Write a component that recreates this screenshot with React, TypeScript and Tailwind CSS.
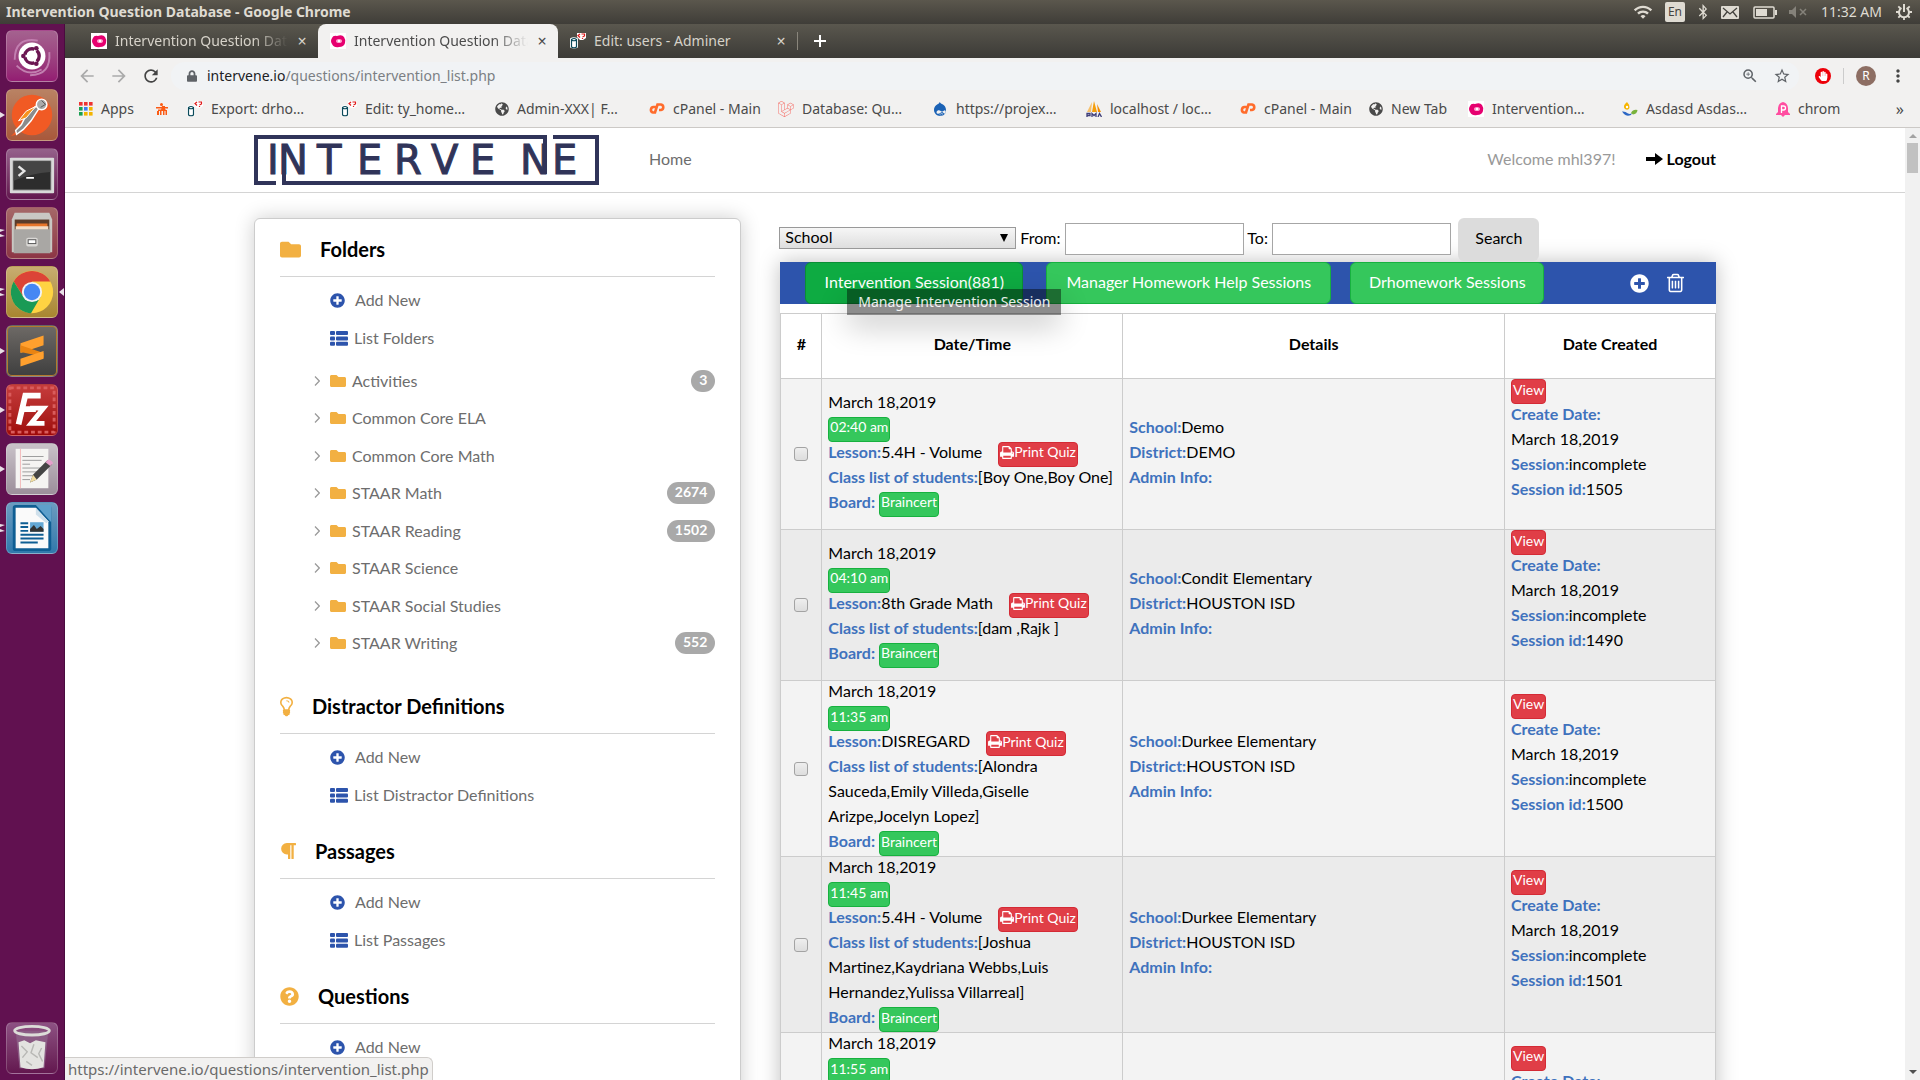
import React from "react";
import {
  FaFolder,
  FaPlusCircle,
  FaParagraph,
  FaQuestionCircle,
  FaDrupal,
  FaLaravel,
  FaGlobeAmericas,
  FaBluetoothB,
  FaHandPaper,
  FaLock,
} from "react-icons/fa";
import { MdArrowBack, MdArrowForward, MdRefresh, MdStarBorder, MdZoomIn, MdMoreVert, MdWifi } from "react-icons/md";

/* ---------- shared glyphs ---------- */

function PrintIcon() {
  return (
    <svg viewBox="0 0 1664 1792" className="h-[15px] w-[14px] shrink-0" fill="currentColor" aria-hidden="true">
      <path d="M384 1536h896v-256h-896v256zm0-640h896v-384h-160q-40 0-68-28t-28-68v-160h-640v640zm1152 64q0-26-19-45t-45-19-45 19-19 45 19 45 45 19 45-19 19-45zm128 0v416q0 13-9.500 22.500t-22.500 9.500h-224v160q0 40-28 68t-68 28h-960q-40 0-68-28t-28-68v-160h-224q-13 0-22.500-9.500t-9.500-22.500v-416q0-79 56.500-135.500t135.500-56.500h64v-544q0-40 28-68t68-28h672q40 0 88 20t76 48l152 152q28 28 48 76t20 88v256h64q79 0 135.500 56.500t56.500 135.500z" />
    </svg>
  );
}

function TrashIcon() {
  return (
    <svg viewBox="0 0 1408 1792" className="h-[22px] w-[17px]" fill="currentColor" aria-hidden="true">
      <path d="M512 736v576q0 14-9 23t-23 9h-64q-14 0-23-9t-9-23v-576q0-14 9-23t23-9h64q14 0 23 9t9 23zm256 0v576q0 14-9 23t-23 9h-64q-14 0-23-9t-9-23v-576q0-14 9-23t23-9h64q14 0 23 9t9 23zm256 0v576q0 14-9 23t-23 9h-64q-14 0-23-9t-9-23v-576q0-14 9-23t23-9h64q14 0 23 9t9 23zm128 724v-948h-896v948q0 22 7 40.500t14.500 27 10.500 8.500h832q3 0 10.500-8.500t14.500-27 7-40.500zm-672-1076h448l-48-117q-7-9-17-11h-317q-10 2-17 11zm928 32v64q0 14-9 23t-23 9h-96v948q0 83-47 143.500t-113 60.500h-832q-66 0-113-58.500t-47-141.500v-952h-96q-14 0-23-9t-9-23v-64q0-14 9-23t23-9h309l70-167q15-37 54-63t79-26h320q40 0 79 26t54 63l70 167h309q14 0 23 9t9 23z" />
    </svg>
  );
}

function BulbIcon() {
  return (
    <svg viewBox="0 0 1024 1792" className="h-[23px] w-[13px]" fill="currentColor" aria-hidden="true">
      <path d="M736 576q0 13-9.500 22.500t-22.500 9.500-22.500-9.500-9.500-22.500q0-46-54-71t-106-25q-13 0-22.500-9.500t-9.500-22.500 9.500-22.500 22.500-9.500q50 0 99.500 16t87 54 37.500 90zm160 0q0-72-34.500-134t-90-101.500-123-62-136.500-22.500-136.500 22.500-123 62-90 101.500-34.500 134q0 101 68 180 10 11 30.500 33t30.500 33q128 153 141 298h228q13-145 141-298 10-11 30.500-33t30.500-33q68-79 68-180zm128 0q0 155-103 268-45 49-74.500 87t-59.500 95.500-34 107.500q47 28 47 82 0 37-25 64 25 27 25 64 0 52-45 81 13 23 13 47 0 46-31.500 71t-77.500 25q-20 44-60 70t-87 26-87-26-60-70q-46 0-77.500-25t-31.500-71q0-24 13-47-45-29-45-81 0-37 25-64-25-27-25-64 0-54 47-82-4-50-34-107.500t-59.500-95.500-74.500-87q-103-113-103-268 0-99 44.500-184.500t117-142 164-89 186.500-32.500 186.500 32.500 164 89 117 142 44.500 184.500z" />
    </svg>
  );
}

function ListIcon() {
  return (
    <svg viewBox="0 0 18 15" className="h-[15px] w-[18px] shrink-0" fill="currentColor" aria-hidden="true">
      {[0, 5.4, 10.8].map((y) => (
        <g key={y}>
          <rect x="0" y={y} width="5" height="4" rx="1" />
          <rect x="6" y={y} width="12" height="4" rx="1" />
        </g>
      ))}
    </svg>
  );
}

function PinkFavicon() {
  return (
    <svg viewBox="0 0 16 16" className="size-4 shrink-0" aria-hidden="true">
      <rect width="16" height="16" fill="#fff" />
      <path d="M2 5Q3 2 7 3Q12 1 14 4Q16 7 15 10Q14 14 9 14Q4 15 2 11Q0 8 2 5Z" fill="#e6006f" />
      <ellipse cx="9" cy="8" rx="3" ry="2" fill="#ff9ccc" />
      <circle cx="9" cy="8" r="1.200" fill="#fff" />
    </svg>
  );
}

function AdminerIcon() {
  return (
    <svg viewBox="0 0 16 16" className="size-4 shrink-0" aria-hidden="true">
      <path d="M0 5.500Q3.500 3 8 5.500V14.500Q4 16.500 0 14.500Z" fill="#fff" />
      <path d="M1.500 6.500Q4 4.500 6.500 6.500V14Q4 15.500 1.500 14Z" fill="#fff" stroke="#0b4a5a" strokeWidth="1.200" />
      <path d="M1.500 7Q4 8.500 6.500 7" fill="none" stroke="#0b4a5a" strokeWidth="1.200" />
      <path d="M7 0H16V5L13 7H10L7 4Z" fill="#fff" />
      <path d="M10 1L8 2.500L10 4.500M11.500 1H14.500V3L12.500 4M12.500 5V6" fill="none" stroke="#e01b1b" strokeWidth="1.200" />
    </svg>
  );
}

function CpanelIcon() {
  return (
    <svg viewBox="0 0 16 12" className="h-3 w-4 shrink-0" fill="none" stroke="#ff6c2c" strokeWidth="2.600" aria-hidden="true">
      <path d="M7 4H4.500A2.800 2.800 0 0 0 4 9.500H6L8.500 1.500H12A2.800 2.800 0 0 1 12 7H10" />
    </svg>
  );
}

function FigureIcon() {
  return (
    <svg viewBox="0 0 12 12" className="size-3 shrink-0" fill="#fb5b14" aria-hidden="true">
      <circle cx="5.500" cy="1.500" r="1.500" />
      <path d="M0 4H12V5.500H0ZM2 6.500H10V8H2ZM1 8H3V12H1ZM4 8H5.500V12H4ZM7 8H8.500V12H7ZM9.500 7H11V12H9.500Z" />
      <path d="M6 3H9V7H5Z" />
    </svg>
  );
}

function AppsIcon() {
  const colors = ["#e33", "#e33", "#e33", "#1a9f52", "#3b7ded", "#f3b400", "#1a9f52", "#f3b400", "#f3b400"];
  return (
    <svg viewBox="0 0 14 14" className="size-3.5 shrink-0" aria-hidden="true">
      {colors.map((c, i) => (
        <rect key={i} x={(i % 3) * 5} y={Math.floor(i / 3) * 5} width="3.600" height="3.600" fill={c} />
      ))}
    </svg>
  );
}

function PmaIcon() {
  return (
    <svg viewBox="0 0 16 16" className="size-4 shrink-0" aria-hidden="true">
      <path d="M6 1L1 11H5Z" fill="#f7c069" />
      <path d="M8 0L6 11H11Z" fill="#f59e0b" />
      <path d="M11 3L12 11H15Z" fill="#f08a00" />
      <path d="M1 16V12.500H4V14.500H1M6 16V12.500L8 14.500L10 12.500V16M12 16L13.500 12.500L15.500 16" fill="none" stroke="#3f3f7a" strokeWidth="1.300" />
    </svg>
  );
}

function WavesIcon() {
  return (
    <svg viewBox="0 0 16 16" className="size-4 shrink-0" aria-hidden="true">
      <path d="M5 1Q8 4 7.500 7Q6 10 3 8Q0 5 5 1Z" fill="#f7b500" />
      <circle cx="5" cy="6" r="1.200" fill="#fff" />
      <path d="M0 10.500Q3 10 6 12.500Q8 13.500 10 12L9 14Q5 16 2 13Z" fill="#2c67c4" />
      <path d="M9 12Q11 8 15.500 9Q15 13 11 13.500Z" fill="#79b23c" />
    </svg>
  );
}

function BellIcon() {
  return (
    <svg viewBox="0 0 14 16" className="h-4 w-3.5 shrink-0" aria-hidden="true">
      <path d="M7 1Q11.500 2 12 7V11L14 13V14H0V13L2 11V7Q2.500 2 7 1Z" fill="#ff4da0" />
      <path d="M5 14H9L7 16Z" fill="#ff4da0" />
      <path d="M5.500 12V5H7.500A1.800 1.800 0 0 1 7.500 9H5.500" fill="none" stroke="#fff" strokeWidth="1.300" />
    </svg>
  );
}

/* ---------- desktop: top panel and launcher ---------- */

function SystemBar() {
  return (
    <div className="flex h-6 shrink-0 items-center justify-between bg-linear-to-b from-[#5b574d] to-[#3f3d38] pr-2 pl-1.5 text-[#dfdbd2]">
      <span className="text-sm leading-6 font-bold">Intervention Question Database - Google Chrome</span>
      <div className="flex items-center">
        <MdWifi className="mr-3 size-5" />
        <span className="mr-3 flex h-5 w-5 items-center justify-center rounded-xs bg-[#dfdbd2] text-xs text-[#45433e]">En</span>
        <FaBluetoothB className="mr-3 h-4 w-3" />
        <svg viewBox="0 0 18 13" className="mr-3.5 h-[13px] w-[18px]" aria-hidden="true">
          <rect width="18" height="13" rx="1" fill="#dfdbd2" />
          <path d="M2 2L9 8L16 2M2 11L6 6M16 11L12 6" fill="none" stroke="#45433e" strokeWidth="1.300" />
        </svg>
        <svg viewBox="0 0 24 13" className="mr-3 h-[13px] w-6" aria-hidden="true">
          <rect x="1" y="1" width="20" height="11" rx="1" fill="none" stroke="#dfdbd2" strokeWidth="1.500" />
          <rect x="3" y="3" width="11" height="7" fill="#dfdbd2" />
          <rect x="22" y="4" width="2" height="5" fill="#dfdbd2" />
        </svg>
        <svg viewBox="0 0 18 12" className="mr-3.5 h-3 w-[18px] text-[#85827a]" aria-hidden="true">
          <path d="M0 4H3L7 0V12L3 8H0Z" fill="currentColor" />
          <path d="M11 3L17 9M17 3L11 9" stroke="currentColor" strokeWidth="1.500" />
        </svg>
        <span className="mr-3.5 text-sm leading-6">11:32 AM</span>
        <svg viewBox="0 0 16 16" className="size-4" fill="none" stroke="#dfdbd2" aria-hidden="true">
          <path d="M5.500 4A5 5 0 1 0 10.500 4" strokeWidth="2" />
          <path d="M8 0V8" strokeWidth="2" />
          <path d="M8 13V16M0 8H3M13 8H16M2.300 2.300L4.500 4.500M13.700 2.300L11.500 4.500M2.300 13.700L4.500 11.500M13.700 13.700L11.500 11.500" strokeWidth="1.800" />
        </svg>
      </div>
    </div>
  );
}

const launcher: { name: string; tile: string; marks: number; active?: boolean; art: React.ReactNode }[] = [
  {
    name: "Dash",
    tile: "bg-linear-to-b from-[#a4628f] to-[#931c72]",
    marks: 0,
    art: (
      <>
        <path d="M8 30Q8 6 32 10M44 22Q46 46 24 46M10 36Q22 48 36 40" fill="none" stroke="#c27fb0" strokeWidth="2" />
        <circle cx="26" cy="26" r="14" fill="#fff" />
        <circle cx="26" cy="26" r="7.500" fill="none" stroke="#6b1652" strokeWidth="3.500" strokeDasharray="13 2.700" strokeDashoffset="-9" />
        <circle cx="17" cy="26" r="2.400" fill="#6b1652" />
        <circle cx="30.500" cy="18" r="2.400" fill="#6b1652" />
        <circle cx="30.500" cy="34" r="2.400" fill="#6b1652" />
      </>
    ),
  },
  {
    name: "Postman",
    tile: "bg-linear-to-b from-[#b98263] to-[#a8583b]",
    marks: 1,
    art: (
      <>
        <circle cx="26" cy="26" r="21" fill="#f15a24" />
        <path d="M4 48L12 40L10 46Z" fill="#f15a24" />
        <path d="M34 18L25 32L17 41L10 46L9 42L15 36L21 24L30 17Z" fill="#8b8b8b" stroke="#fff" strokeWidth="1.500" />
        <path d="M30 17L20 22L12 32L20 29Z" fill="#f7931e" stroke="#fff" />
        <circle cx="36" cy="15" r="5.500" fill="#aaa" stroke="#fff" strokeWidth="1.500" />
        <path d="M36 11L40 15L35 18" fill="none" stroke="#555" />
      </>
    ),
  },
  {
    name: "Terminal",
    tile: "bg-linear-to-b from-[#95618b] to-[#63174f]",
    marks: 0,
    art: (
      <>
        <rect x="3" y="9" width="46" height="37" rx="1" fill="#d9d9d9" />
        <rect x="6" y="12" width="40" height="31" fill="#777" />
        <rect x="7" y="13" width="38" height="29" fill="#2d2d2d" />
        <path d="M7 13H45V24Q26 25 7 33Z" fill="#454545" />
        <path d="M12 18L18 23L12 28" fill="none" stroke="#e6e6e6" strokeWidth="2.500" />
        <path d="M20 30H28" stroke="#fff" strokeWidth="2" />
      </>
    ),
  },
  {
    name: "Files",
    tile: "bg-linear-to-b from-[#a56868] to-[#8c3545]",
    marks: 2,
    art: (
      <>
        <path d="M8 5H44L47 12V46H5V12Z" fill="#c9c7c3" />
        <rect x="8" y="12" width="36" height="14" fill="#5b3b2a" />
        <path d="M10 16H42V22H10Z" fill="#e8752b" />
        <path d="M9 19H43V24H9Z" fill="#f4dcc7" />
        <path d="M7 22H45V47H7Z" fill="#a9a7a4" />
        <rect x="20" y="31" width="12" height="9" rx="2" fill="#dad8d5" />
        <rect x="22" y="33" width="8" height="4" fill="#fff" stroke="#555" />
      </>
    ),
  },
  {
    name: "Google Chrome",
    tile: "bg-linear-to-b from-[#c8ad70] to-[#a8862f]",
    marks: 2,
    active: true,
    art: (
      <>
        <circle cx="26" cy="26" r="22" fill="#ffd342" />
        <path d="M7 15A22 22 0 0 1 45 15H26L17 31Z" fill="#dc4437" />
        <path d="M7 15A22 22 0 0 0 25 48L35 31L17 31Z" fill="#1a9a55" />
        <circle cx="26" cy="26" r="10.500" fill="#f3f3f3" />
        <circle cx="26" cy="26" r="8.500" fill="#4587f3" />
      </>
    ),
  },
  {
    name: "Sublime Text",
    tile: "bg-linear-to-b from-[#6e6a66] to-[#3f3f3f] ring-1 ring-[#b37a2d] ring-inset",
    marks: 1,
    art: (
      <>
        <path d="M14 18L38 10V20L14 28Z" fill="#ffa02e" />
        <path d="M14 20L38 28V33L28 30L14 27Z" fill="#e98412" />
        <path d="M14 34L38 26V34L14 42Z" fill="#ffa02e" />
      </>
    ),
  },
  {
    name: "FileZilla",
    tile: "bg-linear-to-b from-[#c63c3c] to-[#9e0808]",
    marks: 1,
    art: (
      <>
        <rect x="3" y="3" width="46" height="46" fill="none" stroke="#d95c5c" strokeWidth="3" strokeDasharray="4 3" />
        <path d="M12 41L19 11H35M15 25H30" fill="none" stroke="#fff" strokeWidth="6" />
        <path d="M24 24H38L25 40H39" fill="none" stroke="#fff" strokeWidth="5" />
      </>
    ),
  },
  {
    name: "Text Editor",
    tile: "bg-linear-to-b from-[#c9c2c8] to-[#9c8f9b]",
    marks: 1,
    art: (
      <>
        <rect x="9" y="5" width="34" height="41" fill="#f5f4f2" />
        <path d="M14 5V46" stroke="#f2b9b9" />
        <path d="M16 13H38M16 17H36M16 21H24M16 25H38M16 29H34M16 33H30M16 37H24" stroke="#9a9a9a" />
        <path d="M24 40L27 32L42 17L47 21L31 37Z" fill="#444" />
        <path d="M24 40L27 32L31 37Z" fill="#f0dca0" />
        <path d="M40 19L43 16Q47 17 48 20L45 23Z" fill="#e6a0cc" />
      </>
    ),
  },
  {
    name: "LibreOffice Writer",
    tile: "bg-linear-to-b from-[#6c9cc0] to-[#2f79ac]",
    marks: 2,
    art: (
      <>
        <rect x="6" y="2" width="40" height="48" rx="3" fill="#0f5e93" />
        <path d="M30 2H46V20Z" fill="#5ea0cb" />
        <path d="M9 5H30L43 19V47H9Z" fill="#fafafa" />
        <path d="M30 5L43 19L41 21L30 12Z" fill="#cfe0eb" />
        <path d="M14 21H22M14 25H22M14 29H22M14 33H38M14 37H38M14 41H32" stroke="#0f5e93" strokeWidth="2" />
        <rect x="24" y="20" width="14" height="10" fill="#63a7d4" />
        <path d="M24 30V27L28 23L31 27L35 24L38 27V30Z" fill="#333" />
      </>
    ),
  },
];

function Tile({ item }: { item: (typeof launcher)[number] }) {
  return (
    <div className="relative flex justify-center">
      {item.marks > 0 && (
        <svg viewBox="0 0 5 10" className="absolute top-[21px] left-0 h-[10px] w-[5px]" fill="#e8e0e6" aria-hidden="true">
          {item.marks === 1 ? <path d="M0 2L5 5L0 8Z" /> : <path d="M0 1L5 2L0 4ZM0 6L5 8L0 9Z" />}
        </svg>
      )}
      <button type="button" aria-label={item.name} className={`size-[52px] overflow-hidden rounded-md border border-white/20 ${item.tile}`}>
        <svg viewBox="0 0 52 52" className="size-full" aria-hidden="true">
          {item.art}
        </svg>
      </button>
      {item.active && (
        <svg viewBox="0 0 5 8" className="absolute top-[22px] right-0 h-2 w-[5px]" fill="#e8e0e6" aria-hidden="true">
          <path d="M5 0L0 4L5 8Z" />
        </svg>
      )}
    </div>
  );
}

function Launcher() {
  return (
    <nav aria-label="Launcher" className="flex w-[65px] shrink-0 flex-col gap-[7px] border-r border-[#4a0b3f] bg-[#611150] pt-1.5 pb-1.5">
      {launcher.map((item) => (
        <Tile key={item.name} item={item} />
      ))}
      <div className="mt-auto">
        <Tile
          item={{
            name: "Trash",
            tile: "bg-linear-to-b from-[#8d5183] to-[#63174f]",
            marks: 0,
            art: (
              <>
                <path d="M9 8L13 47H39L43 8Z" fill="#8b5b84" />
                <path d="M12 20L18 18L24 21L30 18L40 20L38 46Q26 50 14 46Z" fill="#e3e3e0" />
                <path d="M15 24L21 30L16 36M28 22L25 31L32 36M36 26L33 32L37 40M20 40L26 44" fill="none" stroke="#b8b8b5" strokeWidth="1.500" />
                <ellipse cx="26" cy="8" rx="18" ry="4.500" fill="none" stroke="#dcdcd8" strokeWidth="3" />
              </>
            ),
          }}
        />
      </div>
    </nav>
  );
}

/* ---------- browser chrome ---------- */

function TabStrip() {
  return (
    <div className="flex h-[34px] shrink-0 items-stretch bg-linear-to-b from-[#5a574e] to-[#3c3b37] pl-3.5 text-sm text-[#d6d2c9]">
      <div className="flex w-[239px] items-center pr-2.5 pl-3">
        <PinkFavicon />
        <span className="ml-2 flex-1 overflow-hidden whitespace-nowrap mask-r-from-80%">Intervention Question Database</span>
        <button type="button" aria-label="Close tab" className="ml-2 w-3 text-base">×</button>
      </div>
      <div className="flex w-[240px] items-center rounded-t-lg bg-[#f2f1f0] pr-2.5 pl-3 text-[#4c4c4c]">
        <PinkFavicon />
        <span className="ml-2 flex-1 overflow-hidden whitespace-nowrap mask-r-from-80%">Intervention Question Database</span>
        <button type="button" aria-label="Close tab" className="ml-2 w-3 text-base">×</button>
      </div>
      <div className="flex w-[239px] items-center pr-2.5 pl-3">
        <AdminerIcon />
        <span className="ml-2 flex-1 overflow-hidden whitespace-nowrap">Edit: users - Adminer</span>
        <button type="button" aria-label="Close tab" className="ml-2 w-3 text-base">×</button>
      </div>
      <div className="my-2 w-px bg-[#8a867c]" />
      <button type="button" aria-label="New tab" className="ml-4 flex items-center">
        <svg viewBox="0 0 12 12" className="size-3" aria-hidden="true">
          <path d="M6 0V12M0 6H12" stroke="#fff" strokeWidth="2" />
        </svg>
      </button>
    </div>
  );
}

function AddressBar() {
  return (
    <div className="flex h-9 shrink-0 items-center bg-[#f2f1f0] pr-3 pl-3 text-[#5f6368]">
      <MdArrowBack className="mr-3 size-5 text-[#aaa]" />
      <MdArrowForward className="mr-3 size-5 text-[#aaa]" />
      <MdRefresh className="mr-2.5 size-5 text-[#444]" />
      <div className="flex h-7 flex-1 items-center rounded-full bg-[#f1f3f5] pr-2 pl-4">
        <FaLock className="mr-2.5 h-3 w-2.5 shrink-0" />
        <span className="flex-1 text-sm text-[#7b7f84]">
          <span className="text-[#202124]">intervene.io</span>/questions/intervention_list.php
        </span>
        <MdZoomIn className="mr-3.5 size-[18px]" />
        <MdStarBorder className="size-[18px]" />
      </div>
      <span className="ml-4 flex size-4 items-center justify-center rounded-full bg-[#ed0009] text-white">
        <FaHandPaper className="size-2.5" />
      </span>
      <span className="mx-3 h-4 w-px bg-[#ccc]" />
      <span className="mr-3 flex size-5 items-center justify-center rounded-full bg-[#8d6e63] text-xs text-white">R</span>
      <MdMoreVert className="size-5 text-[#444]" />
    </div>
  );
}

const bookmarks: { label: string; width: string; icon: React.ReactNode }[] = [
  { label: "Apps", width: "w-[77px]", icon: <AppsIcon /> },
  { label: "", width: "w-[31px]", icon: <FigureIcon /> },
  { label: "Export: drho…", width: "w-[154px]", icon: <AdminerIcon /> },
  { label: "Edit: ty_home…", width: "w-[154px]", icon: <AdminerIcon /> },
  { label: "Admin-XXX| F…", width: "w-[154px]", icon: <FaGlobeAmericas className="size-3.5 shrink-0" /> },
  { label: "cPanel - Main", width: "w-[129px]", icon: <CpanelIcon /> },
  { label: "Database: Qu…", width: "w-[154px]", icon: <FaLaravel className="size-4 shrink-0 text-[#f56f68]" /> },
  { label: "https://projex…", width: "w-[154px]", icon: <FaDrupal className="size-4 shrink-0 text-[#1b62b5]" /> },
  { label: "localhost / loc…", width: "w-[154px]", icon: <PmaIcon /> },
  { label: "cPanel - Main", width: "w-[129px]", icon: <CpanelIcon /> },
  { label: "New Tab", width: "w-[99px]", icon: <FaGlobeAmericas className="size-3.5 shrink-0" /> },
  { label: "Intervention…", width: "w-[154px]", icon: <PinkFavicon /> },
  { label: "Asdasd Asdas…", width: "w-[154px]", icon: <WavesIcon /> },
  { label: "chrom", width: "w-[80px]", icon: <BellIcon /> },
];

function BookmarksBar() {
  return (
    <div className="flex h-[34px] shrink-0 items-center border-b border-[#ccc9c6] bg-[#f2f1f0] pb-1 pl-3.5 text-sm text-[#4a4a4a]">
      {bookmarks.map((b, i) => (
        <a key={i} href="#" aria-label={b.label || "Bookmark"} className={`flex shrink-0 items-center gap-2 whitespace-nowrap ${b.width}`}>
          {b.icon}
          {b.label}
        </a>
      ))}
      <button type="button" aria-label="More bookmarks" className="mr-4 ml-auto text-base leading-5">»</button>
    </div>
  );
}

/* ---------- page ---------- */

function Logo() {
  return (
    <svg viewBox="0 0 345 50" className="h-[50px] w-[345px]" role="img" aria-label="Intervene">
      <g fill="none" stroke="#303459" strokeWidth="4">
        <path d="M291 39V2H2V48H22" />
        <path d="M30 11V48H343V2H299" />
      </g>
      <text
        x="13 24 63 103 140 177 216 266 298"
        y="39"
        fill="#303459"
        stroke="#303459"
        fontSize="40"
        className="font-['DejaVu_Sans']"
      >
        INTERVENE
      </text>
    </svg>
  );
}

function PageHeader() {
  return (
    <header className="h-[65px] shrink-0 border-b border-[#d4d4d4] bg-white">
      <div className="mx-auto flex h-full max-w-[1462px] items-center">
        <Logo />
        <a href="#" className="ml-[50px] pb-0.5 text-[#6d6d6d]">Home</a>
        <span className="ml-auto pb-0.5 text-[#999]">Welcome mhl397!</span>
        <a href="#" className="ml-[30px] flex items-center gap-1 pb-0.5 font-bold text-black">
          <svg viewBox="0 0 17 12" className="h-3 w-[17px]" aria-hidden="true">
            <path d="M0 4H9V0L17 6L9 12V8H0Z" fill="#000" />
          </svg>
          Logout
        </a>
      </div>
    </header>
  );
}

function SectionTitle({ icon, children }: { icon: React.ReactNode; children: React.ReactNode }) {
  return (
    <h2 className="flex h-[55px] items-center gap-[19px] border-b border-[#d4d4d4] text-xl font-bold text-black">
      <span className="text-[#f2b042]">{icon}</span>
      {children}
    </h2>
  );
}

function SectionLinks({ list }: { list?: string }) {
  return (
    <ul className="pt-1 pb-px pl-[50px]">
      <li className="flex h-[38px] items-center">
        <a href="#" className="flex items-center gap-2.5">
          <FaPlusCircle className="size-[15px] text-[#2d54ac]" />
          Add New
        </a>
      </li>
      {list && (
        <li className="flex h-[38px] items-center">
          <a href="#" className="flex items-center gap-1.5">
            <span className="text-[#2d54ac]">
              <ListIcon />
            </span>
            {list}
          </a>
        </li>
      )}
    </ul>
  );
}

const folders: [string, string?][] = [
  ["Activities", "3"],
  ["Common Core ELA"],
  ["Common Core Math"],
  ["STAAR Math", "2674"],
  ["STAAR Reading", "1502"],
  ["STAAR Science"],
  ["STAAR Social Studies"],
  ["STAAR Writing", "552"],
];

function Sidebar() {
  return (
    <aside className="h-[1000px] w-1/3 shrink-0 rounded-md border border-[#ccc] bg-white px-[25px] pt-[3px] text-[#6d6d6d] shadow-[0_0_20px_rgba(0,0,0,0.2)]">
      <SectionTitle icon={<FaFolder className="size-[21px]" />}>Folders</SectionTitle>
      <SectionLinks list="List Folders" />
      <ul className="mt-1 mb-[17px] grid h-75 grid-rows-8 pl-[34px]">
        {folders.map(([name, count]) => (
          <li key={name} className="flex items-center">
            <svg viewBox="0 0 6 10" className="mr-2.5 h-[10px] w-1.5" aria-hidden="true">
              <path d="M1 0.500L5.300 5L1 9.500" fill="none" stroke="#999" strokeWidth="1.200" />
            </svg>
            <FaFolder className="mr-1.5 size-4 text-[#f2b042]" />
            <a href="#">{name}</a>
            {count && (
              <span className="ml-auto h-[22px] rounded-full bg-[#a9a9a9] px-2 text-sm leading-5 font-bold text-white">{count}</span>
            )}
          </li>
        ))}
      </ul>
      <div className="space-y-[9px]">
        <section>
          <SectionTitle icon={<BulbIcon />}>Distractor Definitions</SectionTitle>
          <SectionLinks list="List Distractor Definitions" />
        </section>
        <section>
          <SectionTitle icon={<FaParagraph className="h-5 w-4" />}>Passages</SectionTitle>
          <SectionLinks list="List Passages" />
        </section>
        <section>
          <SectionTitle icon={<FaQuestionCircle className="size-[19px]" />}>Questions</SectionTitle>
          <SectionLinks />
        </section>
      </div>
    </aside>
  );
}

function SearchForm() {
  return (
    <form className="flex h-11 items-center">
      <div className="relative mb-1 w-[237px]">
        <select
          aria-label="School"
          className="block h-[22px] w-full appearance-none border border-[#999] bg-linear-to-b from-[#f6f6f6] to-[#dedede] pb-0.5 pl-[5px] leading-[18px] text-black"
        >
          <option>School</option>
        </select>
        <svg viewBox="0 0 8 8" className="pointer-events-none absolute top-[7px] right-2 size-2" aria-hidden="true">
          <path d="M0 0H8L4 8Z" fill="#000" />
        </svg>
      </div>
      <label htmlFor="from" className="w-[49px] pb-1 pl-1">From:</label>
      <input id="from" type="text" className="mb-0.5 h-8 w-[179px] border border-[#a6a6a6] bg-white px-1" />
      <label htmlFor="to" className="w-7 pb-1 pl-[3px]">To:</label>
      <input id="to" type="text" className="mb-0.5 h-8 w-[179px] border border-[#a6a6a6] bg-white px-1" />
      <button type="submit" className="mb-px ml-[7px] h-[43px] rounded-md bg-[#dcdcdc] px-[17px] pb-1">Search</button>
    </form>
  );
}

const pill = "inline-flex h-[25px] items-center rounded border px-px pb-1 align-top text-sm leading-5 text-white";
const green = "border-[#17b13f] bg-[#35c75c]";
const red = "border-[#d42a35] bg-[#e03e47]";

/* A cell's lines sit slightly above the middle of their 25px line boxes. */
function Line({ children }: { children: React.ReactNode }) {
  return <div className="-mt-[3px] mb-[3px]">{children}</div>;
}

/* A one-line row that may hold pills beside its text. */
function PillLine({ children }: { children: React.ReactNode }) {
  return <div className="flex h-[25px] items-start">{children}</div>;
}

function Label({ children }: { children: React.ReactNode }) {
  return <span className="font-bold text-[#3f72bd]">{children}</span>;
}

type Row = { time: string; lesson: string; students: string; school: string; district: string; id: string };

const rows: Row[] = [
  { time: "02:40 am", lesson: "5.4H - Volume", students: "[Boy One,Boy One]", school: "Demo", district: "DEMO", id: "1505" },
  { time: "04:10 am", lesson: "8th Grade Math", students: "[dam ,Rajk ]", school: "Condit Elementary", district: "HOUSTON ISD", id: "1490" },
  { time: "11:35 am", lesson: "DISREGARD", students: "[Alondra Sauceda,Emily Villeda,Giselle Arizpe,Jocelyn Lopez]", school: "Durkee Elementary", district: "HOUSTON ISD", id: "1500" },
  { time: "11:45 am", lesson: "5.4H - Volume", students: "[Joshua Martinez,Kaydriana Webbs,Luis Hernandez,Yulissa Villarreal]", school: "Durkee Elementary", district: "HOUSTON ISD", id: "1501" },
  { time: "11:55 am", lesson: "5.4H - Volume", students: "[Maria Gomez,Kevin Santos Rivera,Luis Alvarez,Angel Torres]", school: "Durkee Elementary", district: "HOUSTON ISD", id: "1502" },
];

function SessionTable() {
  return (
    <table className="mt-[9px] w-full table-fixed border-collapse leading-[25px]">
      <thead>
        <tr className="h-[65px] font-bold">
          <th className="w-[41px] border border-[#ccc] pb-1.5">#</th>
          <th className="w-[301px] border border-[#ccc] pb-1.5">Date/Time</th>
          <th className="border border-[#ccc] pb-1.5">Details</th>
          <th className="w-[211px] border border-[#ccc] pb-1.5">Date Created</th>
        </tr>
      </thead>
      <tbody>
        {rows.map((r) => (
          <tr key={r.id} className="odd:bg-[#f3f3f3] even:bg-[#ebebeb]">
            <td className="border border-[#ccc]">
              <input
                type="checkbox"
                aria-label={`Select session ${r.id}`}
                className="mx-auto block size-3.5 appearance-none rounded-[3px] border border-[#a3a3a3] bg-linear-to-b from-[#eee] to-[#ddd]"
              />
            </td>
            <td className="border border-[#ccc] px-1.5">
              <PillLine>
                <Line>March 18,2019</Line>
              </PillLine>
              <PillLine>
                <span className={`${pill} ${green}`}>{r.time}</span>
              </PillLine>
              <PillLine>
                <Line>
                  <Label>Lesson:</Label>
                  {r.lesson}
                </Line>
                <button type="button" className={`ml-4 ${pill} ${red}`}>
                  <PrintIcon />
                  Print Quiz
                </button>
              </PillLine>
              <div className="flow-root">
                <Line>
                  <Label>Class list of students:</Label>
                  {r.students}
                </Line>
              </div>
              <PillLine>
                <Line>
                  <Label>Board:</Label>
                </Line>
                <span className={`ml-1 ${pill} ${green}`}>Braincert</span>
              </PillLine>
            </td>
            <td className="border border-[#ccc] px-1.5">
              <div className="flow-root">
                <Line>
                  <Label>School:</Label>
                  {r.school}
                  <br />
                  <Label>District:</Label>
                  {r.district}
                  <br />
                  <Label>Admin Info:</Label>
                </Line>
              </div>
            </td>
            <td className="border border-[#ccc] px-1.5 pb-[25px]">
              <PillLine>
                <button type="button" className={`${pill} ${red}`}>View</button>
              </PillLine>
              <div className="flow-root">
                <Line>
                  <Label>Create Date:</Label>
                  <br />
                  March 18,2019
                  <br />
                  <Label>Session:</Label>incomplete
                  <br />
                  <Label>Session id:</Label>
                  {r.id}
                </Line>
              </div>
            </td>
          </tr>
        ))}
      </tbody>
    </table>
  );
}

function Sessions() {
  return (
    <main className="min-w-0 flex-1">
      <SearchForm />
      <div className="ml-px bg-white shadow-[0_0_20px_rgba(0,0,0,0.25)]">
        <div className="relative flex h-[42px] items-stretch bg-[#2d54ac] pl-[25px] text-white">
          <button type="button" className="w-[218px] rounded-md border border-[#0a8f35] bg-[#0eab42] pb-[3px]">Intervention Session(881)</button>
          <button type="button" className="ml-[23px] w-[285px] rounded-md border border-[#17b13f] bg-[#35c75c] pb-[3px]">Manager Homework Help Sessions</button>
          <button type="button" className="ml-[19px] w-[194px] rounded-md border border-[#17b13f] bg-[#35c75c] pb-[3px]">Drhomework Sessions</button>
          <div className="mr-8 ml-auto flex items-center gap-[18px]">
            <button type="button" aria-label="Add session"><FaPlusCircle className="size-[19px]" /></button>
            <button type="button" aria-label="Delete sessions"><TrashIcon /></button>
          </div>
          <div role="tooltip" className="absolute top-[27px] left-[67px] h-[26px] w-[214px] bg-black/45 text-center font-['Noto_Sans'] text-sm leading-[26px] whitespace-nowrap text-white/90 shadow-[0_12px_30px_rgba(0,0,0,0.2)]">
            Manage Intervention Session
          </div>
        </div>
        <SessionTable />
      </div>
    </main>
  );
}

function PageScrollbar() {
  return (
    <div className="flex w-[15px] shrink-0 flex-col items-center justify-between bg-[#f1f1f1] py-1.5">
      <div className="flex w-full flex-col items-center gap-[5px]">
        <svg viewBox="0 0 8 4" className="h-1 w-2" aria-hidden="true"><path d="M0 4L4 0L8 4Z" fill="#a3a3a3" /></svg>
        <div className="h-[30px] w-[11px] bg-[#c1c1c1]" />
      </div>
      <svg viewBox="0 0 8 4" className="h-1 w-2" aria-hidden="true"><path d="M0 0L4 4L8 0Z" fill="#505050" /></svg>
    </div>
  );
}

export default function App() {
  return (
    <div className="flex h-screen flex-col overflow-hidden bg-white font-['Noto_Sans',sans-serif]">
      <SystemBar />
      <div className="flex min-h-0 flex-1">
        <Launcher />
        <div className="relative flex min-w-0 flex-1 flex-col">
          <TabStrip />
          <AddressBar />
          <BookmarksBar />
          <div className="flex min-h-0 flex-1">
            <div className="min-w-0 flex-1 overflow-hidden font-['Lato',sans-serif] text-base text-black">
              <PageHeader />
              <div className="mx-auto flex max-w-[1462px] items-start gap-[38px] pt-[25px]">
                <Sidebar />
                <Sessions />
              </div>
            </div>
            <PageScrollbar />
          </div>
          <div className="absolute bottom-0 left-0 h-[23px] rounded-tr-md border-t border-r border-[#d0cdca] bg-[#f2f1f0] px-[3px] text-[15px] leading-[22px] text-[#6a6a6a]">
            https://intervene.io/questions/intervention_list.php
          </div>
        </div>
      </div>
    </div>
  );
}
